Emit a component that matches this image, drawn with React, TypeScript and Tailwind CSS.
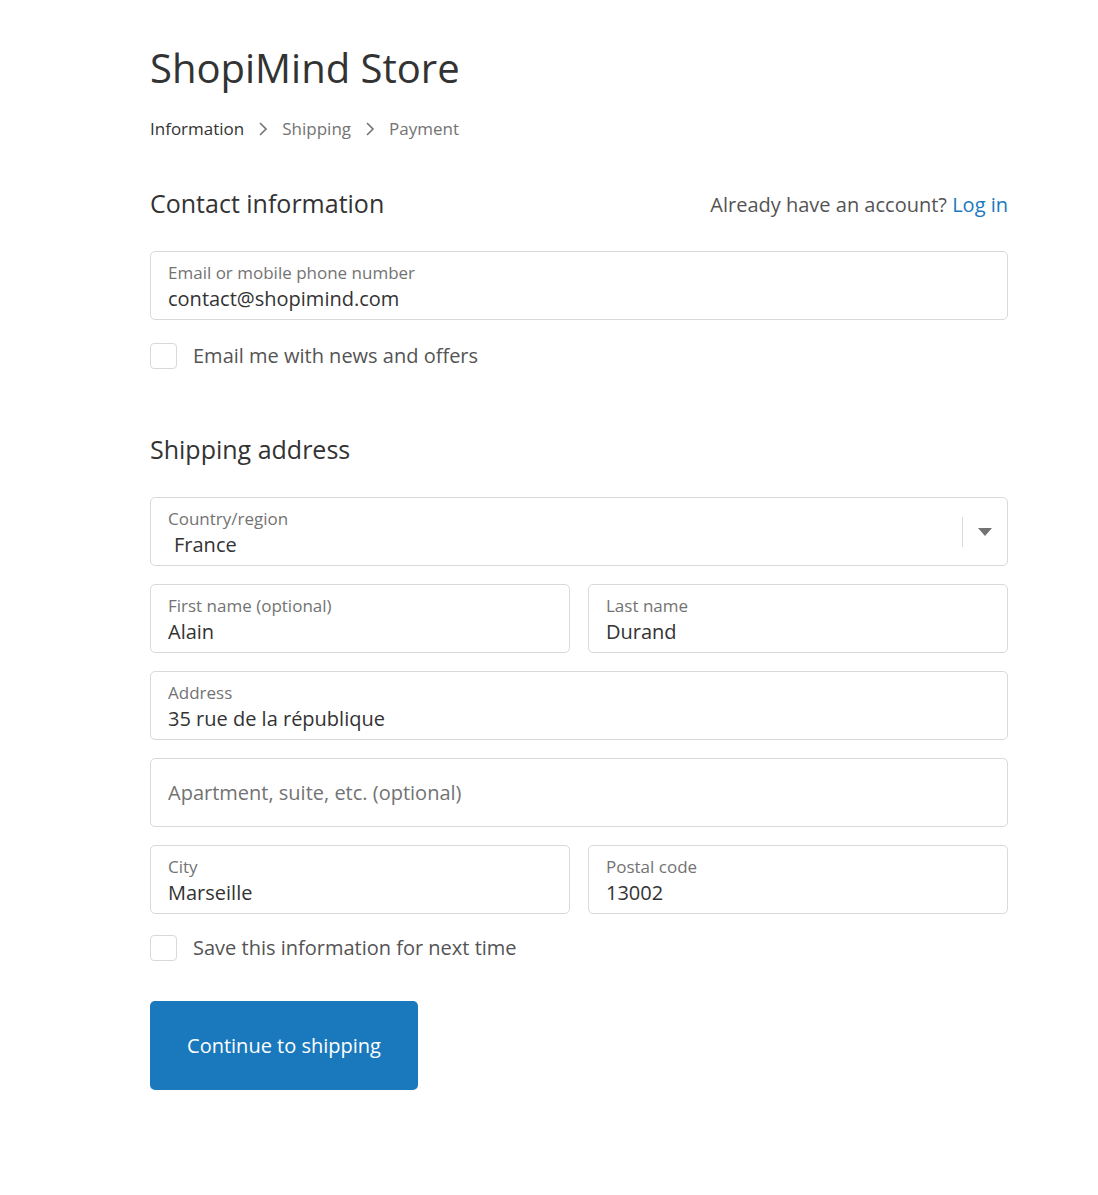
import React from 'react';

const FONT = { fontFamily: '"Open Sans", "Noto Sans", sans-serif' };

function Field({ label, value, placeholder, select }: { label?: string; value?: string; placeholder?: string; select?: boolean }) {
  return (
    <div className="relative flex h-[69px] w-full rounded-[5px] border border-[#d9d9d9] bg-white px-[17px]">
      {placeholder ? (
        <span className="self-center text-[20px] text-[#737373]">{placeholder}</span>
      ) : (
        <div className="flex flex-col pt-[11px]">
          <span className="text-[17px] leading-[20px] text-[#737373]">{label}</span>
          <span className={`mt-[1px] text-[20px] leading-[29px] text-[#333333] ${select ? 'pl-[6px]' : ''}`}>{value}</span>
        </div>
      )}
      {select && (
        <div className="absolute right-0 top-0 flex h-full items-center">
          <div className="h-[30px] w-px bg-[#d9d9d9]" />
          <div className="flex w-[44px] justify-center">
            <svg width="14" height="8" viewBox="0 0 14 8"><path d="M0 0h14L7 8z" fill="#737373" /></svg>
          </div>
        </div>
      )}
    </div>
  );
}

function Check({ label }: { label: string }) {
  return (
    <div className="flex items-center gap-[16px]">
      <div className="h-[26px] w-[27px] rounded-[4px] border border-[#d9d9d9] bg-white" />
      <span className="text-[20px] text-[#545454]">{label}</span>
    </div>
  );
}

function Chevron() {
  return (
    <svg width="10" height="14" viewBox="0 0 10 14" className="mx-[14px]">
      <path d="M2 1l6 6-6 6" fill="none" stroke="#737373" strokeWidth="1.6" />
    </svg>
  );
}

export default function App() {
  return (
    <div className="min-h-screen bg-white" style={FONT}>
      <div className="ml-[150px] w-[858px] pt-[40px] pb-[100px]">
        <h1 className="text-[40px] leading-[56px] text-[#333333]">ShopiMind Store</h1>

        <div className="mt-[22px] flex items-center text-[17px] leading-[22px]">
          <span className="text-[#333333]">Information</span>
          <Chevron />
          <span className="text-[#737373]">Shipping</span>
          <Chevron />
          <span className="text-[#737373]">Payment</span>
        </div>

        <div className="mt-[46px] flex items-end justify-between">
          <h2 className="text-[25px] leading-[34px] text-[#333333]">Contact information</h2>
          <p className="text-[20px] leading-[30px] text-[#545454]">
            Already have an account? <a className="text-[#1a79bd]">Log in</a>
          </p>
        </div>

        <div className="mt-[31px]">
          <Field label="Email or mobile phone number" value="contact@shopimind.com" />
        </div>
        <div className="mt-[21px]">
          <Check label="Email me with news and offers" />
        </div>

        <h2 className="mt-[61px] text-[25px] leading-[34px] text-[#333333]">Shipping address</h2>

        <div className="mt-[31px] flex flex-col gap-[18px]">
          <Field label="Country/region" value="France" select />
          <div className="grid grid-cols-2 gap-[18px]">
            <Field label="First name (optional)" value="Alain" />
            <Field label="Last name" value="Durand" />
          </div>
          <Field label="Address" value="35 rue de la république" />
          <Field placeholder="Apartment, suite, etc. (optional)" />
          <div className="grid grid-cols-2 gap-[18px]">
            <Field label="City" value="Marseille" />
            <Field label="Postal code" value="13002" />
          </div>
        </div>

        <div className="mt-[19px]">
          <Check label="Save this information for next time" />
        </div>

        <button className="mt-[38px] h-[89px] w-[268px] rounded-[5px] bg-[#1a79bd] text-[20px] text-white">
          Continue to shipping
        </button>
      </div>
    </div>
  );
}
